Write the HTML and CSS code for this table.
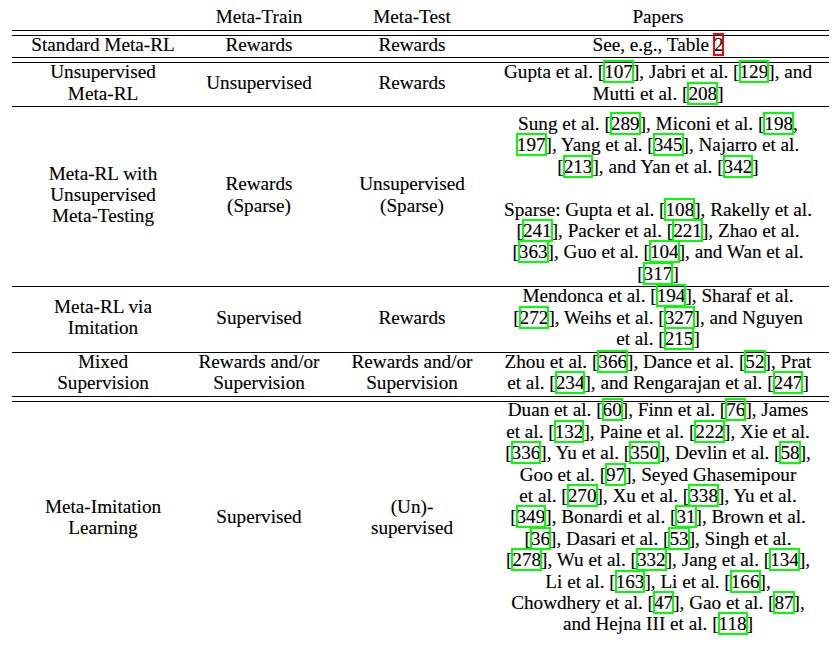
FILE: index.html
```html
<!DOCTYPE html>
<html>
<head>
<meta charset="utf-8">
<link rel="stylesheet" href="styles.css">
</head>
<body>
<div class="table">
  <div class="row head">
    <div class="cell"></div>
    <div class="cell">Meta-Train</div>
    <div class="cell">Meta-Test</div>
    <div class="cell papers">Papers</div>
  </div>
  <div class="rule2"></div>
  <div class="row">
    <div class="cell">Standard Meta-RL</div>
    <div class="cell">Rewards</div>
    <div class="cell">Rewards</div>
    <div class="cell papers">See, e.g., Table <span class="r">2</span></div>
  </div>
  <div class="rule2"></div>
  <div class="row">
    <div class="cell">Unsupervised<br>Meta-RL</div>
    <div class="cell">Unsupervised</div>
    <div class="cell">Rewards</div>
    <div class="cell papers">Gupta et al. [<span class="c">107</span>], Jabri et al. [<span class="c">129</span>], and<br>Mutti et al. [<span class="c">208</span>]</div>
  </div>
  <div class="rule"></div>
  <div class="row">
    <div class="cell">Meta-RL with<br>Unsupervised<br>Meta-Testing</div>
    <div class="cell">Rewards<br>(Sparse)</div>
    <div class="cell">Unsupervised<br>(Sparse)</div>
    <div class="cell papers tall">Sung et al. [<span class="c">289</span>], Miconi et al. [<span class="c">198</span>,<br><span class="c">197</span>], Yang et al. [<span class="c">345</span>], Najarro et al.<br>[<span class="c">213</span>], and Yan et al. [<span class="c">342</span>]<br><br>Sparse: Gupta et al. [<span class="c">108</span>], Rakelly et al.<br>[<span class="c">241</span>], Packer et al. [<span class="c">221</span>], Zhao et al.<br>[<span class="c">363</span>], Guo et al. [<span class="c">104</span>], and Wan et al.<br>[<span class="c">317</span>]</div>
  </div>
  <div class="rule"></div>
  <div class="row">
    <div class="cell">Meta-RL via<br>Imitation</div>
    <div class="cell">Supervised</div>
    <div class="cell">Rewards</div>
    <div class="cell papers">Mendonca et al. [<span class="c">194</span>], Sharaf et al.<br>[<span class="c">272</span>], Weihs et al. [<span class="c">327</span>], and Nguyen<br>et al. [<span class="c">215</span>]</div>
  </div>
  <div class="rule"></div>
  <div class="row">
    <div class="cell">Mixed<br>Supervision</div>
    <div class="cell">Rewards and/or<br>Supervision</div>
    <div class="cell">Rewards and/or<br>Supervision</div>
    <div class="cell papers">Zhou et al. [<span class="c">366</span>], Dance et al. [<span class="c">52</span>], Prat<br>et al. [<span class="c">234</span>], and Rengarajan et al. [<span class="c">247</span>]</div>
  </div>
  <div class="rule2"></div>
  <div class="row">
    <div class="cell">Meta-Imitation<br>Learning</div>
    <div class="cell">Supervised</div>
    <div class="cell">(Un)-<br>supervised</div>
    <div class="cell papers">Duan et al. [<span class="c">60</span>], Finn et al. [<span class="c">76</span>], James<br>et al. [<span class="c">132</span>], Paine et al. [<span class="c">222</span>], Xie et al.<br>[<span class="c">336</span>], Yu et al. [<span class="c">350</span>], Devlin et al. [<span class="c">58</span>],<br>Goo et al. [<span class="c">97</span>], Seyed Ghasemipour<br>et al. [<span class="c">270</span>], Xu et al. [<span class="c">338</span>], Yu et al.<br>[<span class="c">349</span>], Bonardi et al. [<span class="c">31</span>], Brown et al.<br>[<span class="c">36</span>], Dasari et al. [<span class="c">53</span>], Singh et al.<br>[<span class="c">278</span>], Wu et al. [<span class="c">332</span>], Jang et al. [<span class="c">134</span>],<br>Li et al. [<span class="c">163</span>], Li et al. [<span class="c">166</span>],<br>Chowdhery et al. [<span class="c">47</span>], Gao et al. [<span class="c">87</span>],<br>and Hejna III et al. [<span class="c">118</span>]</div>
  </div>
</div>
</body>
</html>
```

FILE: styles.css
```css
html, body {
  margin: 0;
  padding: 0;
  background: #ffffff;
}

body {
  font-family: "Liberation Serif", "Times New Roman", serif;
  font-size: 19.2px;
  line-height: 21.4px;
  color: #000000;
  -webkit-text-stroke: 0.15px #000000;
}

.table {
  margin-left: 12px;
  width: 817px;
}

.row {
  display: grid;
  grid-template-columns: 182px 130px 176px 329px;
  align-items: center;
  text-align: center;
}

.cell {
  margin: -2.2px 0 2.2px;
  white-space: nowrap;
}

.cell.papers {
  padding-right: 13px;
}

.cell.tall {
  padding-top: 8px;
}

.head {
  padding-top: 8.6px;
}

.rule {
  border-top: 1px solid #000000;
}

.rule2 {
  border-top: 1px solid #000000;
  border-bottom: 1px solid #000000;
  height: 4px;
}

.c {
  outline: 2px solid #00ff00;
  outline-offset: -1px;
}

.r {
  outline: 2px solid #ff0000;
  outline-offset: -1px;
}
```
